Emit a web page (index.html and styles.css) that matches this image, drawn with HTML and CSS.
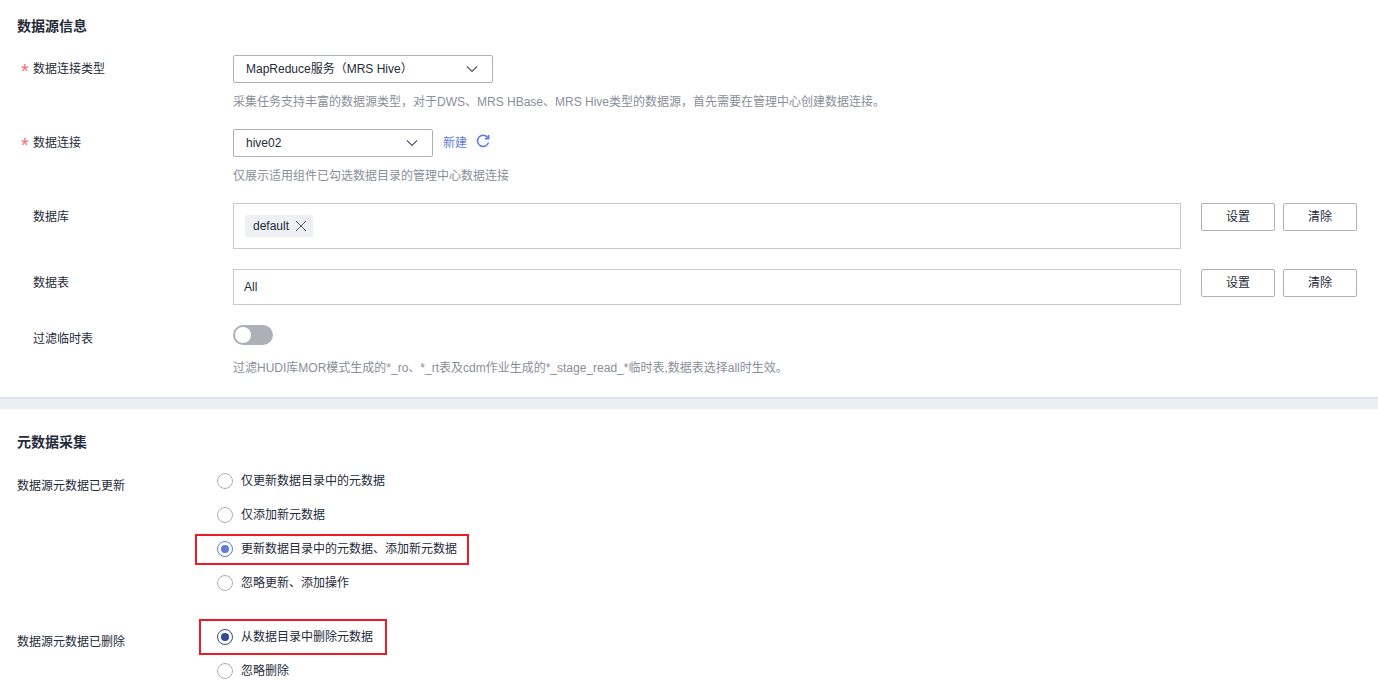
FILE: index.html
```html
<!DOCTYPE html>
<html lang="zh-CN">
<head>
    <meta charset="UTF-8">
    <meta name="viewport" content="width=device-width, initial-scale=1.0">
    <title>采集任务</title>
    <link rel="stylesheet" href="styles.css">
</head>
<body>
    <section class="panel source">
        <h2>数据源信息</h2>

        <div class="row">
            <label class="name required" for="connType">数据连接类型</label>
            <div class="field">
                <div class="select select-wide">
                    <select id="connType">
                        <option>MapReduce服务（MRS Hive）</option>
                    </select>
                    <svg class="arrow" width="12" height="8" viewBox="0 0 12 8"><path d="M1 1.5l5 5 5-5"/></svg>
                </div>
                <p class="hint">采集任务支持丰富的数据源类型，对于DWS、MRS HBase、MRS Hive类型的数据源，首先需要在管理中心创建数据连接。</p>
            </div>
        </div>

        <div class="row">
            <label class="name required" for="conn">数据连接</label>
            <div class="field">
                <div class="line">
                    <div class="select">
                        <select id="conn">
                            <option>hive02</option>
                        </select>
                        <svg class="arrow" width="12" height="8" viewBox="0 0 12 8"><path d="M1 1.5l5 5 5-5"/></svg>
                    </div>
                    <a class="create" href="#">新建</a>
                    <button type="button" class="refresh" aria-label="刷新">
                        <svg width="14" height="14" viewBox="0 0 14 14">
                            <path d="M11.8 3.8A5.6 5.6 0 1 0 12.5 8.4"/>
                            <path d="M12.6 1v3.8H8.8"/>
                        </svg>
                    </button>
                </div>
                <p class="hint">仅展示适用组件已勾选数据目录的管理中心数据连接</p>
            </div>
        </div>

        <div class="row">
            <span class="name">数据库</span>
            <div class="box">
                <span class="tag">default
                    <button type="button" aria-label="删除"><svg width="12" height="12" viewBox="0 0 12 12"><path d="M1 1l10 10M11 1L1 11"/></svg></button>
                </span>
            </div>
            <div class="actions">
                <button type="button" class="btn">设置</button>
                <button type="button" class="btn">清除</button>
            </div>
        </div>

        <div class="row">
            <label class="name" for="tables">数据表</label>
            <input type="text" id="tables" class="input" value="All">
            <div class="actions">
                <button type="button" class="btn">设置</button>
                <button type="button" class="btn">清除</button>
            </div>
        </div>

        <div class="row">
            <label class="name" for="filterTmp">过滤临时表</label>
            <div class="field">
                <div class="switch-line"><input type="checkbox" id="filterTmp" class="switch"></div>
                <p class="hint">过滤HUDI库MOR模式生成的*_ro、*_rt表及cdm作业生成的*_stage_read_*临时表,数据表选择all时生效。</p>
            </div>
        </div>
    </section>

    <section class="panel collect">
        <h2>元数据采集</h2>

        <div class="row" role="radiogroup" aria-labelledby="updatedName">
            <span class="name" id="updatedName">数据源元数据已更新</span>
            <div class="radios">
                <label class="radio"><input type="radio" name="updated">仅更新数据目录中的元数据</label>
                <label class="radio"><input type="radio" name="updated">仅添加新元数据</label>
                <label class="radio marked"><input type="radio" name="updated" checked>更新数据目录中的元数据、添加新元数据</label>
                <label class="radio"><input type="radio" name="updated">忽略更新、添加操作</label>
            </div>
        </div>

        <div class="row" role="radiogroup" aria-labelledby="deletedName">
            <span class="name" id="deletedName">数据源元数据已删除</span>
            <div class="radios">
                <label class="radio marked marked-tall"><input type="radio" name="deleted" class="dark" checked>从数据目录中删除元数据</label>
                <label class="radio"><input type="radio" name="deleted">忽略删除</label>
            </div>
        </div>
    </section>
</body>
</html>
```
FILE: styles.css
```css
* {
    box-sizing: border-box;
}
body {
    margin: 0;
    background: #fff;
    color: #252b3a;
    font: 12px/18px "Liberation Sans", "Noto Sans CJK SC", sans-serif;
}
input, select, button {
    font: inherit;
    color: inherit;
    margin: 0;
}
svg {
    display: block;
    fill: none;
}
h2 {
    margin: 0 0 19px;
    font-size: 14px;
    line-height: 20px;
}
.panel {
    padding-left: 17px;
    padding-right: 21px;
}
.source {
    padding-top: 16px;
    padding-bottom: 20px;
}
.collect {
    padding-top: 23px;
    padding-bottom: 19px;
    border-top: 12px solid #ebeef4;
    position: relative;
}
/* тень верхней панели на разделителе */
.collect::before {
    content: "";
    position: absolute;
    left: 0;
    right: 0;
    top: -12px;
    height: 2px;
    background: linear-gradient(#dcdfe7, #e5e8ee);
}
.row {
    display: flex;
    align-items: flex-start;
    margin-bottom: 18px;
}
.row:last-child {
    margin-bottom: 0;
}
.name {
    flex: none;
    width: 216px;
    padding-left: 16px;
    line-height: 28px;
}
.required::before {
    content: "*";
    float: left;
    width: 12px;
    height: 28px;
    margin-left: -12px;
    color: #f66f6a;
    font-size: 20px;
    line-height: 32px;
}
.field {
    flex: 1;
}
.hint {
    margin: 10px 0 0;
    color: #8a8e99;
}
.line {
    display: flex;
    align-items: center;
}
.select {
    position: relative;
    width: 200px;
}
.select-wide {
    width: 260px;
}
.select select {
    display: block;
    appearance: none;
    width: 100%;
    height: 28px;
    padding: 0 32px 0 12px;
    border: 1px solid #adb0b8;
    border-radius: 2px;
    background: #fff;
}
.arrow {
    position: absolute;
    right: 15px;
    top: 10px;
    stroke: #575d6c;
    stroke-width: 1.2;
    pointer-events: none;
}
.create {
    margin: 0 9px 0 10px;
    color: #5e7ce0;
    text-decoration: none;
}
.refresh {
    padding: 0 0 4px;
    border: 0;
    background: none;
    cursor: pointer;
}
.refresh svg {
    stroke: #5e7ce0;
    stroke-width: 1.6;
}
.box, .input {
    flex: 1;
    margin-bottom: 2px;
    border: 1px solid #c8c9cc;
    background: #fff;
}
.box {
    padding: 11px;
}
.input {
    height: 36px;
    padding: 0 10px;
}
.tag {
    display: inline-flex;
    align-items: center;
    gap: 6px;
    height: 22px;
    padding: 0 6px 0 8px;
    border-radius: 2px;
    background: #eef0f5;
    vertical-align: top;
}
.tag button {
    padding: 0;
    border: 0;
    background: none;
    cursor: pointer;
}
.tag svg {
    stroke: #575d6c;
}
.actions {
    display: flex;
    gap: 8px;
    margin-left: 20px;
}
.btn {
    width: 74px;
    height: 28px;
    padding: 0;
    border: 1px solid #adb0b8;
    border-radius: 2px;
    background: #fff;
    cursor: pointer;
}
.switch-line {
    height: 24px;
}
.switch {
    display: block;
    appearance: none;
    width: 40px;
    height: 20px;
    padding: 2px;
    border-radius: 10px;
    background: #adb0b8;
    cursor: pointer;
}
.switch::before {
    content: "";
    display: block;
    width: 16px;
    height: 16px;
    border-radius: 50%;
    background: #fff;
}
.switch:checked {
    padding-left: 22px;
    background: #5e7ce0;
}
.collect .row {
    margin-bottom: 34px;
}
.collect .row:last-child {
    margin-bottom: 0;
}
.collect .name {
    width: 200px;
    padding-left: 0;
    line-height: 30px;
}
.radios {
    display: flex;
    flex-direction: column;
    align-items: flex-start;
    gap: 14px;
}
.radio {
    position: relative;
    display: flex;
    align-items: center;
    gap: 8px;
    height: 20px;
}
.radio input {
    display: grid;
    place-content: center;
    appearance: none;
    width: 16px;
    height: 16px;
    border: 1px solid #adb0b8;
    border-radius: 50%;
    background: #fff;
}
.radio input:checked {
    border-color: #5e7ce0;
}
.radio input:checked::before {
    content: "";
    width: 8px;
    height: 8px;
    border-radius: 50%;
    background: #5e7ce0;
}
.radio input.dark:checked {
    border-color: #344899;
}
.radio input.dark:checked::before {
    background: #344899;
}
/* красная рамка вокруг нужного варианта */
.marked::after {
    content: "";
    position: absolute;
    inset: -5px -12px -6px -22px;
    border: 2px solid #ed1c24;
    pointer-events: none;
}
.marked-tall::after {
    inset: -8px -14px -8px -18px;
}
```
